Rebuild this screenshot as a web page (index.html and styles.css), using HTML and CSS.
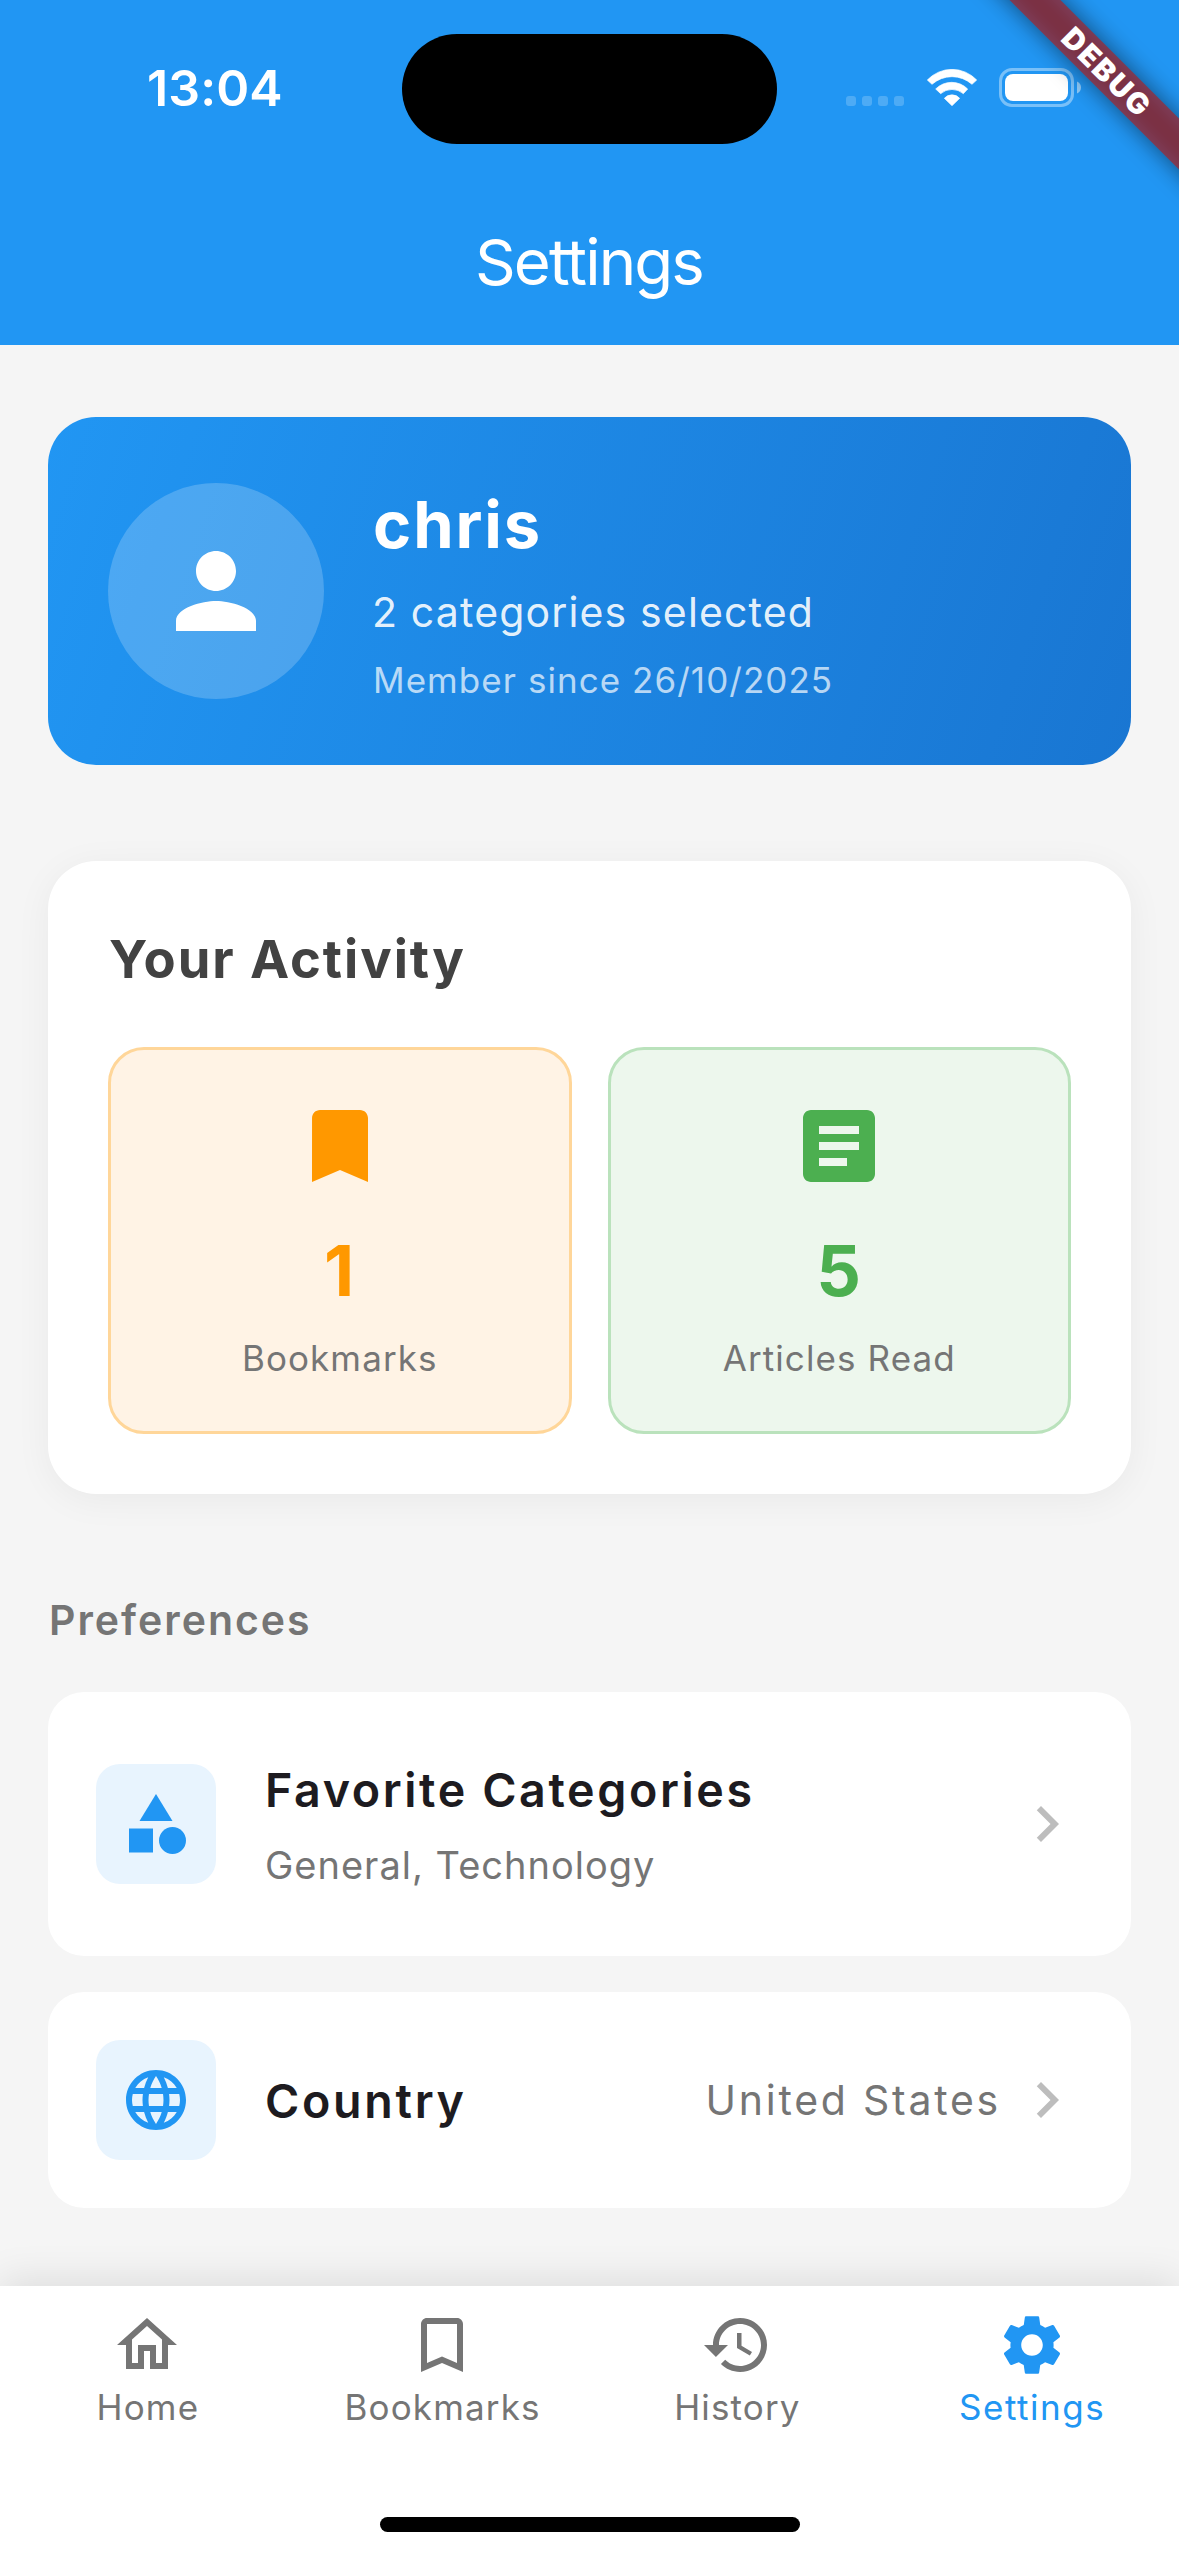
FILE: index.html
```
<!DOCTYPE html>
<html lang="en">
<head>
<meta charset="utf-8">
<title>Settings</title>
<link rel="stylesheet" href="styles.css">
</head>
<body>
<div class="page">
  <header class="header">
    <div class="status">
      <span class="time">13:04</span>
      <span class="island"></span>
      <div class="indicators">
        <span class="dots"><i></i><i></i><i></i><i></i></span>
        <svg class="wifi" viewBox="0 0 156 111" fill="#fff" stroke="#fff" stroke-width="2" stroke-linejoin="round">
          <path d="M4 33A101.7 101.7 0 0 1 152 33L138 46A89.8 89.8 0 0 0 18 46Z"/>
          <path d="M29 60A67.7 67.7 0 0 1 125 60L112 74A52 52 0 0 0 44 74Z"/>
          <path d="M55 88A30.6 30.6 0 0 1 101 88L78 110Z"/>
        </svg>
        <svg class="battery" viewBox="0 0 84 39">
          <rect x="1.5" y="1.5" width="72" height="36" rx="11.5" fill="none" stroke="#fff" stroke-opacity=".4" stroke-width="3"/>
          <rect x="6" y="6" width="63" height="27" rx="8" fill="#fff"/>
          <path d="M78 13.5c2.400 1 4 3.300 4 6s-1.600 5-4 6z" fill="#fff" fill-opacity=".5"/>
        </svg>
      </div>
    </div>
    <h1 class="title">Settings</h1>
  </header>

  <main class="content">
    <section class="profile">
      <div class="avatar">
        <svg class="icon-xl" viewBox="0 0 24 24"><path d="M12 12c2.210 0 4-1.790 4-4s-1.790-4-4-4-4 1.790-4 4 1.790 4 4 4zm0 2c-2.670 0-8 1.340-8 4v2h16v-2c0-2.660-5.330-4-8-4z"/></svg>
      </div>
      <div class="profile-text">
        <div class="name">chris</div>
        <div class="selected-count">2 categories selected</div>
        <div class="since">Member since 26/10/2025</div>
      </div>
    </section>

    <section class="activity">
      <h2 class="activity-title">Your Activity</h2>
      <div class="tiles">
        <div class="tile orange">
          <svg class="icon-l" viewBox="0 0 24 24"><path d="M17 3H7c-1.100 0-1.990.9-1.990 2L5 21l7-3 7 3V5c0-1.100-.9-2-2-2z"/></svg>
          <div class="number">1</div>
          <div class="label">Bookmarks</div>
        </div>
        <div class="tile green">
          <svg class="icon-l" viewBox="0 0 24 24"><path d="M19 3H5c-1.100 0-2 .9-2 2v14c0 1.100.9 2 2 2h14c1.100 0 2-.9 2-2V5c0-1.100-.9-2-2-2zm-5 14H7v-2h7v2zm3-4H7v-2h10v2zm0-4H7V7h10v2z"/></svg>
          <div class="number">5</div>
          <div class="label">Articles Read</div>
        </div>
      </div>
    </section>

    <h2 class="section-title">Preferences</h2>

    <div class="row tall">
      <div class="row-icon">
        <svg class="icon-m" viewBox="0 0 24 24"><path d="M12 2l-5.500 9h11z"/><circle cx="17.500" cy="17.500" r="4.500"/><path d="M3 13.500h8v8H3z"/></svg>
      </div>
      <div class="row-text">
        <div class="row-title favorites">Favorite Categories</div>
        <div class="row-sub">General, Technology</div>
      </div>
      <svg class="icon-m chevron" viewBox="0 0 24 24"><path d="M10 6L8.590 7.410 13.170 12l-4.580 4.590L10 18l6-6z"/></svg>
    </div>

    <div class="row">
      <div class="row-icon">
        <svg class="icon-m" viewBox="0 0 24 24"><path d="M11.990 2C6.470 2 2 6.480 2 12s4.470 10 9.990 10C17.520 22 22 17.520 22 12S17.520 2 11.990 2zm6.930 6h-2.950c-.32-1.250-.78-2.450-1.380-3.560 1.840.63 3.370 1.910 4.330 3.560zM12 4.040c.83 1.200 1.480 2.530 1.910 3.960h-3.820c.43-1.430 1.080-2.760 1.910-3.960zM4.260 14C4.100 13.360 4 12.690 4 12s.1-1.360.26-2h3.380c-.08.66-.14 1.320-.14 2s.06 1.340.14 2H4.260zm.82 2h2.950c.32 1.250.78 2.450 1.380 3.560-1.840-.63-3.370-1.900-4.330-3.560zm2.950-8H5.080c.96-1.660 2.490-2.930 4.330-3.560C8.810 5.550 8.350 6.750 8.030 8zM12 19.960c-.83-1.200-1.480-2.530-1.910-3.960h3.820c-.43 1.430-1.080 2.760-1.910 3.960zM14.340 14H9.660c-.09-.66-.16-1.320-.16-2s.07-1.350.16-2h4.680c.09.65.16 1.320.16 2s-.07 1.340-.16 2zm.25 5.560c.6-1.110 1.060-2.310 1.380-3.560h2.950c-.96 1.650-2.490 2.930-4.330 3.560zM16.360 14c.08-.66.14-1.320.14-2s-.06-1.340-.14-2h3.380c.16.64.26 1.310.26 2s-.1 1.360-.26 2h-3.380z"/></svg>
      </div>
      <div class="row-text">
        <div class="row-title country">Country</div>
      </div>
      <div class="row-value">United States</div>
      <svg class="icon-m chevron" viewBox="0 0 24 24"><path d="M10 6L8.590 7.410 13.170 12l-4.580 4.590L10 18l6-6z"/></svg>
    </div>
  </main>

  <nav class="nav">
    <div class="tabs">
      <a class="tab">
        <svg class="icon-m" viewBox="0 0 24 24"><path d="M12 5.690l5 4.500V18h-2v-6H9v6H7v-7.810l5-4.500M12 3L2 12h3v8h6v-6h2v6h6v-8h3L12 3z"/></svg>
        <span>Home</span>
      </a>
      <a class="tab">
        <svg class="icon-m" viewBox="0 0 24 24"><path d="M17 3H7c-1.100 0-2 .9-2 2v16l7-3 7 3V5c0-1.100-.9-2-2-2zm0 15l-5-2.180L7 18V5h10v13z"/></svg>
        <span>Bookmarks</span>
      </a>
      <a class="tab">
        <svg class="icon-m" viewBox="0 0 24 24"><path d="M13 3c-4.970 0-9 4.030-9 9H1l3.890 3.890.07.14L9 12H6c0-3.870 3.130-7 7-7s7 3.130 7 7-3.130 7-7 7c-1.930 0-3.680-.79-4.940-2.060l-1.420 1.420C8.270 19.990 10.510 21 13 21c4.970 0 9-4.030 9-9s-4.030-9-9-9zm-1 5v5l4.280 2.540.72-1.210-3.500-2.080V8H12z"/></svg>
        <span>History</span>
      </a>
      <a class="tab active">
        <svg class="icon-m" viewBox="0 0 24 24"><path d="M19.140,12.940c0.040-0.300,0.060-0.610,0.060-0.940c0-0.320-0.020-0.640-0.070-0.940l2.030-1.580c0.180-0.140,0.230-0.410,0.120-0.610l-1.920-3.320c-0.120-0.220-0.370-0.290-0.590-0.220l-2.390,0.960c-0.500-0.380-1.030-0.700-1.620-0.940L14.400,2.810c-0.040-0.240-0.240-0.410-0.480-0.410h-3.840c-0.240,0-0.430,0.170-0.470,0.410L9.250,5.350C8.660,5.590,8.120,5.920,7.630,6.290L5.240,5.330c-0.220-0.080-0.470,0-0.590,0.220L2.740,8.870C2.620,9.080,2.660,9.340,2.860,9.480l2.030,1.580C4.840,11.360,4.800,11.690,4.800,12s0.020,0.640,0.070,0.940l-2.030,1.580c-0.180,0.140-0.230,0.410-0.120,0.610l1.920,3.320c0.120,0.220,0.370,0.290,0.590,0.220l2.390-0.960c0.500,0.380,1.030,0.700,1.620,0.940l0.360,2.540c0.050,0.240,0.240,0.410,0.480,0.410h3.840c0.240,0,0.440-0.170,0.470-0.410l0.360-2.540c0.590-0.240,1.130-0.560,1.620-0.940l2.390,0.960c0.220,0.080,0.470,0,0.590-0.220l1.920-3.320c0.120-0.220,0.070-0.470-0.120-0.610L19.140,12.940z M12,15.600c-1.980,0-3.600-1.620-3.600-3.600s1.620-3.600,3.600-3.600s3.600,1.620,3.600,3.600S13.980,15.600,12,15.600z"/></svg>
        <span>Settings</span>
      </a>
    </div>
    <div class="home-indicator"></div>
  </nav>

  <div class="banner"><div class="ribbon"><span>DEBUG</span></div></div>
</div>
</body>
</html>
```
FILE: styles.css
```
* { box-sizing: border-box; }

body {
  margin: 0;
  font-family: Inter, "Liberation Sans", sans-serif;
  background: #f5f5f5;
}

h1, h2 { margin: 0; }
svg { display: block; flex: none; fill: currentColor; }

.page {
  position: relative;
  display: flex;
  flex-direction: column;
  width: 1179px;
  height: 2556px;
  overflow: hidden;
}

.icon-xl { width: 120px; height: 120px; }
.icon-l { width: 96px; height: 96px; }
.icon-m { width: 72px; height: 72px; }

/* Header */
.header { flex: none; height: 345px; background: #2196f3; color: #fff; }
.status {
  display: grid;
  grid-template-columns: 402px 375px 1fr;
  align-items: center;
  height: 177px;
}
.time {
  padding: 0 0 2px 147px;
  font-size: 50px;
  line-height: 60px;
  font-weight: 600;
  letter-spacing: .1px;
}
.island { height: 110px; margin-top: 1px; border-radius: 55px; background: #000; }
.indicators { display: flex; align-items: center; padding: 0 0 2px 69px; }
.dots { display: flex; gap: 6px; margin-top: 26px; }
.dots i { width: 10px; height: 10px; border-radius: 3px; background: rgba(255,255,255,.2); }
.wifi { width: 52px; height: 37px; margin-left: 22px; }
.battery { width: 84px; height: 39px; margin-left: 21px; }
.title {
  height: 168px;
  padding-top: 1px;
  font-size: 63.500px;
  line-height: 168px;
  font-weight: 400;
  letter-spacing: -1.900px;
  text-align: center;
  text-indent: -1px;
}

/* Body */
.content { flex: 1; min-height: 0; padding: 72px 48px 0; }

.profile {
  display: flex;
  height: 348px;
  padding: 60px;
  border-radius: 48px;
  background: linear-gradient(107.800deg, #2196f3, #1976d2);
  color: #fff;
}
.avatar {
  display: flex;
  align-items: center;
  justify-content: center;
  width: 216px;
  height: 216px;
  margin-top: 6px;
  border-radius: 50%;
  background: rgba(255,255,255,.2);
}
.profile-text { display: flex; flex-direction: column; gap: 11px; padding: 4px 0 0 48px; }
.name { padding-left: 1px; font-size: 65px; line-height: 88px; margin-bottom: 2px; font-weight: 700; letter-spacing: 1.900px; }
.selected-count { font-size: 41px; line-height: 60px; letter-spacing: 1.150px; color: rgba(255,255,255,.9); }
.since { padding-left: 1px; font-size: 35px; line-height: 54px; letter-spacing: 1.050px; color: rgba(255,255,255,.7); }

.activity {
  height: 633px;
  margin-top: 96px;
  padding: 60px;
  border-radius: 48px;
  background: #fff;
  box-shadow: 0 6px 37px rgba(0,0,0,.05);
}
.activity-title {
  padding-left: 1px;
  font-size: 52.500px;
  line-height: 76px;
  font-weight: 700;
  letter-spacing: 1.950px;
  color: #424242;
}
.tiles { display: grid; grid-template-columns: 1fr 1fr; gap: 36px; margin-top: 50px; }
.tile {
  display: flex;
  flex-direction: column;
  align-items: center;
  height: 387px;
  padding-top: 48px;
  border: 3px solid;
  border-radius: 36px;
}
.tile.orange { color: #ff9800; background: #fff3e5; border-color: #ffd699; }
.tile.green { color: #4caf50; background: #edf7ed; border-color: #bae2bc; }
.number { margin-top: 31px; font-size: 70px; line-height: 91px; font-weight: 700; letter-spacing: 1.200px; }
.label { margin-top: 17px; font-size: 35px; line-height: 50px; letter-spacing: 1.100px; color: #757575; }

.section-title {
  margin: 96px 0 42px;
  padding-left: 1px;
  font-size: 41px;
  line-height: 60px;
  font-weight: 620;
  letter-spacing: 2px;
  color: #757575;
}

.row {
  display: flex;
  align-items: center;
  height: 216px;
  padding: 0 48px;
  border-radius: 36px;
  background: #fff;
}
.row.tall { height: 264px; margin-bottom: 36px; }
.row-icon {
  display: flex;
  align-items: center;
  justify-content: center;
  width: 120px;
  height: 120px;
  border-radius: 24px;
  background: #e8f4fe;
  color: #2196f3;
}
.row-text { flex: 1; display: flex; flex-direction: column; gap: 9px; padding-left: 49px; }
.row-title { font-size: 46.600px; line-height: 72px; font-weight: 560; color: #1d1b20; }
.favorites { letter-spacing: 2.600px; }
.country { padding-top: 1px; letter-spacing: 2.700px; }
.row-sub { font-size: 38px; line-height: 60px; letter-spacing: 1px; color: #757575; }
.row-value { margin-right: 10px; font-size: 41px; line-height: 60px; letter-spacing: 2.750px; color: #757575; }
.chevron { color: #bdbdbd; }

/* Bottom navigation */
.nav {
  position: relative;
  flex: none;
  display: flex;
  flex-direction: column;
  align-items: center;
  height: 270px;
  background: #fff;
  box-shadow: 0 -6px 37px rgba(0,0,0,.1);
}
.tabs { display: grid; grid-template-columns: repeat(4, 1fr); width: 100%; height: 231px; padding-top: 23px; }
.tab {
  display: flex;
  flex-direction: column;
  align-items: center;
  gap: 2px;
  font-size: 35px;
  line-height: 48px;
  letter-spacing: 1.150px;
  color: #757575;
}
.tab span { padding-left: 1px; }
.tab.active { color: #2196f3; }
.tab.active span { letter-spacing: 1.500px; }
.home-indicator { width: 420px; height: 15px; border-radius: 8px; background: #000; }

/* Corner ribbon lying over the header */
.banner { position: absolute; top: 0; right: 0; width: 260px; height: 260px; overflow: hidden; }
.ribbon {
  position: absolute;
  top: 54px;
  left: 8px;
  width: 360px;
  height: 36px;
  transform: rotate(45deg);
  color: #fff;
  font-size: 29.500px;
  line-height: 36px;
  font-weight: 900;
  letter-spacing: 2px;
  text-align: center;
}
.ribbon::before { content: ""; position: absolute; inset: 0; background: rgba(0,0,0,.5); filter: blur(12px); }
.ribbon::after { content: ""; position: absolute; inset: 0; background: rgba(183,28,28,.63); }
.ribbon span { position: relative; z-index: 1; }
```
